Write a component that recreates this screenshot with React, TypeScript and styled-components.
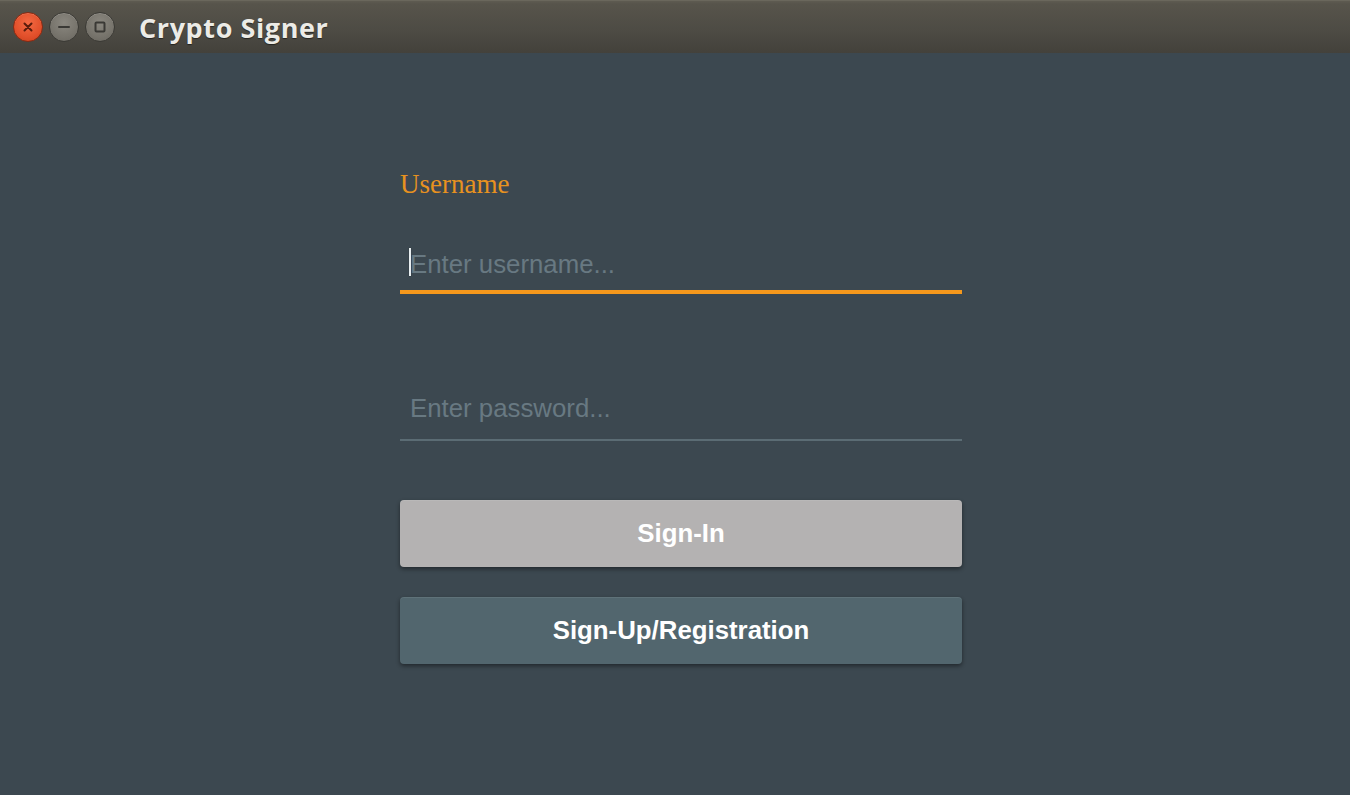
import React from "react";
import styled, { createGlobalStyle } from "styled-components";

const GlobalStyle = createGlobalStyle`
  html, body { margin: 0; padding: 0; height: 100%; }
  body { background: #3c4850; font-family: "Liberation Sans", Arial, sans-serif; }
  #root { height: 100%; }
`;

const Window = styled.div`
  width: 1350px;
  height: 795px;
  display: flex;
  flex-direction: column;
  background: #3c4850;
  overflow: hidden;
`;

const TitleBar = styled.div`
  height: 53px;
  flex: none;
  display: flex;
  align-items: center;
  padding-left: 13px;
  box-sizing: border-box;
  background: linear-gradient(#5e5b51 0px, #57544b 3px, #4d4b44 30px, #43413b 100%);
  border-top: 1px solid #6a675c;
`;

const Controls = styled.div`
  display: flex;
  gap: 6px;
  align-items: center;
`;

const CtrlButton = styled.div<{ $kind: "close" | "plain" }>`
  width: 30px;
  height: 30px;
  border-radius: 50%;
  box-sizing: border-box;
  display: flex;
  align-items: center;
  justify-content: center;
  border: 1px solid ${(p) => (p.$kind === "close" ? "#8a2a12" : "#3b3a35")};
  background: ${(p) =>
    p.$kind === "close"
      ? "radial-gradient(circle at 50% 35%, #f46a43 0%, #e2502b 60%, #c9401d 100%)"
      : "radial-gradient(circle at 50% 35%, #8a877f 0%, #77746c 60%, #68655e 100%)"};
  box-shadow: inset 0 1px 0 rgba(255, 255, 255, 0.15);
`;

const Title = styled.div`
  margin-left: 24px;
  font-family: "Open Sans", "DejaVu Sans", sans-serif;
  font-weight: 700;
  font-size: 27px;
  color: #ecebe6;
  text-shadow: 0 1px 1px rgba(0, 0, 0, 0.5);
  letter-spacing: 0.6px;
`;

const Content = styled.div`
  flex: 1;
  display: flex;
  flex-direction: column;
  padding: 113px 0 0 400px;
`;

const Form = styled.div`
  width: 562px;
  display: flex;
  flex-direction: column;
`;

const Label = styled.label`
  font-family: "Liberation Serif", "Times New Roman", serif;
  font-size: 27px;
  line-height: 36px;
  color: #e8921f;
  height: 36px;
`;

const Field = styled.div<{ $focused?: boolean; $top: number }>`
  position: relative;
  margin-top: ${(p) => p.$top}px;
  border-bottom: ${(p) => (p.$focused ? "4px solid #f5981c" : "2px solid #5b6c74")};
`;

const Input = styled.input<{ $padBottom: number }>`
  display: block;
  width: 100%;
  box-sizing: border-box;
  height: 52px;
  padding: 0 10px ${(p) => p.$padBottom}px 10px;
  border: none;
  outline: none;
  background: transparent;
  font-family: "Liberation Sans", Arial, sans-serif;
  font-size: 25.8px;
  color: #e0e6ea;
  caret-color: transparent;
  &::placeholder {
    color: #687982;
  }
`;

const Caret = styled.span`
  position: absolute;
  left: 9px;
  top: 10px;
  width: 2px;
  height: 28px;
  background: #e8eef0;
  box-shadow: 0 0 1px rgba(0, 0, 0, 0.6);
`;

const Button = styled.button<{ $variant: "light" | "dark"; $top: number }>`
  margin-top: ${(p) => p.$top}px;
  height: 67px;
  width: 100%;
  border: none;
  border-radius: 4px;
  font-family: "Liberation Sans", Arial, sans-serif;
  font-weight: 700;
  font-size: 25.8px;
  color: #ffffff;
  background: ${(p) => (p.$variant === "light" ? "#b4b2b2" : "#52666e")};
  box-shadow: 0 2px 4px rgba(0, 0, 0, 0.45), inset 0 1px 0 rgba(255, 255, 255, 0.08);
  cursor: pointer;
`;

export default function App() {
  return (
    <>
      <GlobalStyle />
      <Window>
        <TitleBar>
          <Controls>
            <CtrlButton $kind="close">
              <svg width="12" height="12" viewBox="0 0 12 12">
                <path d="M2.5 2.5 L9.5 9.5 M9.5 2.5 L2.5 9.5" stroke="#5a1c0c" strokeWidth="2" strokeLinecap="round" />
              </svg>
            </CtrlButton>
            <CtrlButton $kind="plain">
              <svg width="14" height="14" viewBox="0 0 14 14">
                <path d="M2 7 H12" stroke="#3a3935" strokeWidth="2" strokeLinecap="round" />
              </svg>
            </CtrlButton>
            <CtrlButton $kind="plain">
              <svg width="14" height="14" viewBox="0 0 14 14">
                <rect x="2.5" y="2.5" width="9" height="9" rx="1" fill="none" stroke="#3a3935" strokeWidth="2" />
              </svg>
            </CtrlButton>
          </Controls>
          <Title>Crypto Signer</Title>
        </TitleBar>
        <Content>
          <Form>
            <Label>Username</Label>
            <Field $focused $top={36}>
              <Input $padBottom={0} placeholder="Enter username..." />
              <Caret />
            </Field>
            <Field $top={93}>
              <Input type="password" $padBottom={10} placeholder="Enter password..." />
            </Field>
            <Button $variant="light" $top={59}>Sign-In</Button>
            <Button $variant="dark" $top={30}>Sign-Up/Registration</Button>
          </Form>
        </Content>
      </Window>
    </>
  );
}
